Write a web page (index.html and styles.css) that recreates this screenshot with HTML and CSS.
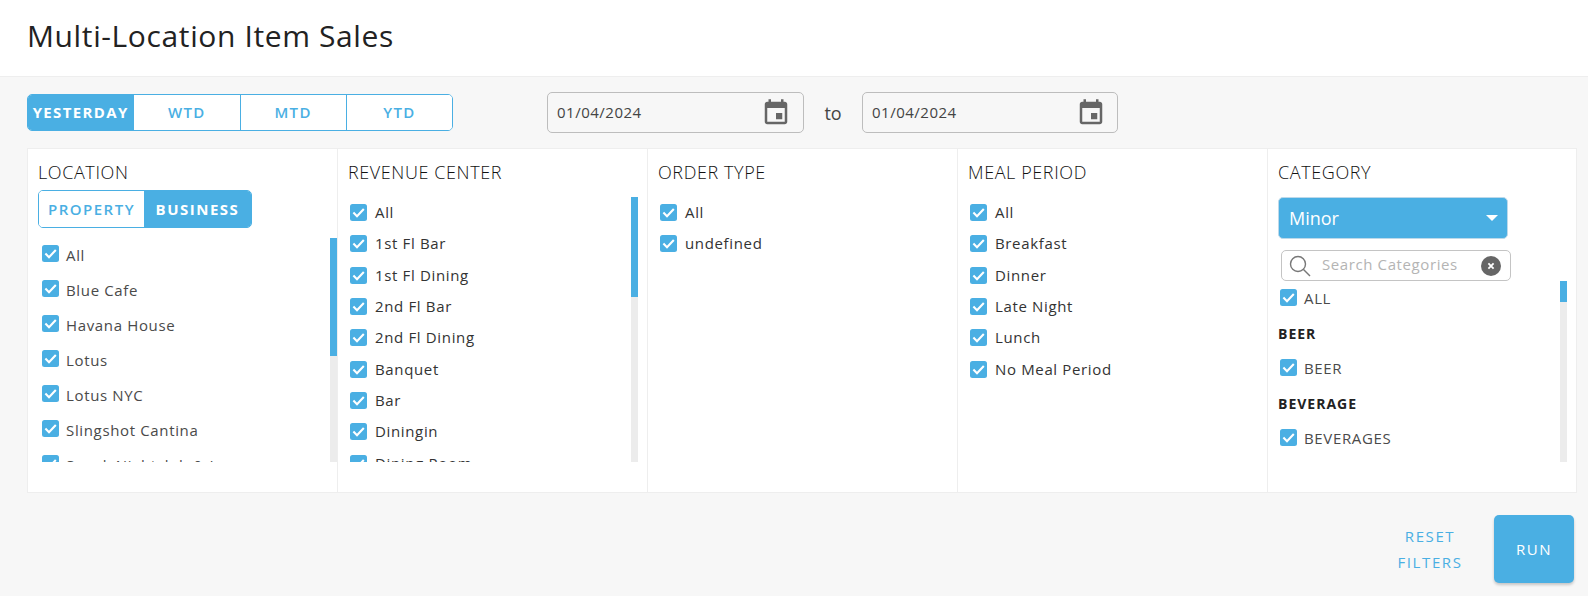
FILE: index.html
```html
<!DOCTYPE html>
<html lang="en">
<head>
<meta charset="utf-8">
<title>Multi-Location Item Sales</title>
<link rel="stylesheet" href="styles.css">
</head>
<body>
<svg class="defs" width="0" height="0" aria-hidden="true">
  <symbol id="check" viewBox="0 0 17 17">
    <rect width="17" height="17" rx="2.5" fill="#4aafe3"/>
    <path d="M3.4 8.6 7 12.2 13.8 5" fill="none" stroke="#fff" stroke-width="2.1"/>
  </symbol>
  <symbol id="cal" viewBox="0 0 24 24">
    <path d="M17 12h-5v5h5v-5zM16 1v2H8V1H6v2H5c-1.11 0-1.99.9-1.99 2L3 19c0 1.1.89 2 2 2h14c1.1 0 2-.9 2-2V5c0-1.1-.9-2-2-2h-1V1h-2zm3 18H5V8h14v11z" fill="#666"/>
  </symbol>
</svg>
<header class="page-header"><h1>Multi-Location Item Sales</h1></header>
<main class="content">
  <div class="toolbar">
    <div class="tabs">
      <button class="tab active">YESTERDAY</button>
      <button class="tab">WTD</button>
      <button class="tab">MTD</button>
      <button class="tab">YTD</button>
    </div>
    <div class="date date-from"><span>01/04/2024</span><svg class="cal"><use href="#cal"/></svg></div>
    <span class="to">to</span>
    <div class="date"><span>01/04/2024</span><svg class="cal"><use href="#cal"/></svg></div>
  </div>

  <section class="panel">
    <div class="col">
      <h2>LOCATION</h2>
      <div class="toggle"><button class="toggle-btn">PROPERTY</button><button class="toggle-btn active">BUSINESS</button></div>
      <ul class="list list-location">
        <li class="item"><svg class="box"><use href="#check"/></svg><span>All</span></li>
        <li class="item"><svg class="box"><use href="#check"/></svg><span>Blue Cafe</span></li>
        <li class="item"><svg class="box"><use href="#check"/></svg><span>Havana House</span></li>
        <li class="item"><svg class="box"><use href="#check"/></svg><span>Lotus</span></li>
        <li class="item"><svg class="box"><use href="#check"/></svg><span>Lotus NYC</span></li>
        <li class="item"><svg class="box"><use href="#check"/></svg><span>Slingshot Cantina</span></li>
        <li class="item"><svg class="box"><use href="#check"/></svg><span>Speak Nightclub &amp; Lounge</span></li>
      </ul>
      <div class="scroll scroll-location"><div class="thumb"></div></div>
    </div>

    <div class="col">
      <h2>REVENUE CENTER</h2>
      <ul class="list list-tall">
        <li class="item"><svg class="box"><use href="#check"/></svg><span>All</span></li>
        <li class="item"><svg class="box"><use href="#check"/></svg><span>1st Fl Bar</span></li>
        <li class="item"><svg class="box"><use href="#check"/></svg><span>1st Fl Dining</span></li>
        <li class="item"><svg class="box"><use href="#check"/></svg><span>2nd Fl Bar</span></li>
        <li class="item"><svg class="box"><use href="#check"/></svg><span>2nd Fl Dining</span></li>
        <li class="item"><svg class="box"><use href="#check"/></svg><span>Banquet</span></li>
        <li class="item"><svg class="box"><use href="#check"/></svg><span>Bar</span></li>
        <li class="item"><svg class="box"><use href="#check"/></svg><span>Diningin</span></li>
        <li class="item"><svg class="box"><use href="#check"/></svg><span>Dining Room</span></li>
      </ul>
      <div class="scroll scroll-revenue"><div class="thumb"></div></div>
    </div>

    <div class="col">
      <h2>ORDER TYPE</h2>
      <ul class="list list-tall">
        <li class="item"><svg class="box"><use href="#check"/></svg><span>All</span></li>
        <li class="item"><svg class="box"><use href="#check"/></svg><span>undefined</span></li>
      </ul>
    </div>

    <div class="col">
      <h2>MEAL PERIOD</h2>
      <ul class="list list-tall">
        <li class="item"><svg class="box"><use href="#check"/></svg><span>All</span></li>
        <li class="item"><svg class="box"><use href="#check"/></svg><span>Breakfast</span></li>
        <li class="item"><svg class="box"><use href="#check"/></svg><span>Dinner</span></li>
        <li class="item"><svg class="box"><use href="#check"/></svg><span>Late Night</span></li>
        <li class="item"><svg class="box"><use href="#check"/></svg><span>Lunch</span></li>
        <li class="item"><svg class="box"><use href="#check"/></svg><span>No Meal Period</span></li>
      </ul>
    </div>

    <div class="col col-last">
      <h2>CATEGORY</h2>
      <div class="select"><span>Minor</span><i class="caret"></i></div>
      <div class="search">
        <svg class="search-icon" viewBox="0 0 22 22"><circle cx="9" cy="9" r="7.5" fill="none" stroke="#777" stroke-width="1.4"/><path d="M14.5 14.5 21 21" stroke="#777" stroke-width="1.4"/></svg>
        <span class="placeholder">Search Categories</span>
        <svg class="clear" viewBox="0 0 20 20"><circle cx="10" cy="10" r="10" fill="#666"/><path d="M7.4 7.4l5.2 5.2M12.6 7.4l-5.2 5.2" stroke="#fff" stroke-width="1.8"/></svg>
      </div>
      <ul class="list list-category">
        <li class="item"><svg class="box"><use href="#check"/></svg><span>ALL</span></li>
        <li class="group">BEER</li>
        <li class="item"><svg class="box"><use href="#check"/></svg><span>BEER</span></li>
        <li class="group">BEVERAGE</li>
        <li class="item"><svg class="box"><use href="#check"/></svg><span>BEVERAGES</span></li>
      </ul>
      <div class="scroll scroll-category"><div class="thumb"></div></div>
    </div>
  </section>

  <div class="actions">
    <button class="reset">RESET<br>FILTERS</button>
    <button class="run">RUN</button>
  </div>
</main>
</body>
</html>
```
FILE: styles.css
```css
* { box-sizing: border-box; }
html, body { margin: 0; padding: 0; }
body {
  height: 596px;
  overflow: hidden;
  background: #f7f7f7;
  color: #333;
  font-family: "Open Sans", sans-serif;
}
button { font-family: inherit; cursor: pointer; }
ul { list-style: none; margin: 0; padding: 0; }
.defs { position: absolute; }

.page-header {
  height: 77px;
  padding: 17px 27px 0;
  background: #fff;
  border-bottom: 1px solid #eeeeee;
}
h1 {
  margin: 0;
  font-size: 30px;
  font-weight: 400;
  line-height: 38px;
  letter-spacing: 0.62px;
  color: #222;
}

.content { padding: 15px 11px 0 27px; }

.toolbar { display: flex; align-items: center; height: 41px; }
.tabs {
  display: flex;
  width: 426px;
  height: 37px;
  margin-right: 94px;
  background: #fff;
  border: 1px solid #4aafe3;
  border-radius: 5px;
  overflow: hidden;
}
.tab {
  flex: 1;
  padding: 0 0 2px;
  background: #fff;
  border: 0;
  border-left: 1px solid #4aafe3;
  color: #4aafe3;
  font-size: 15px;
  font-weight: 600;
  letter-spacing: 1.35px;
}
.tab.active {
  background: #4aafe3;
  border-left: 0;
  color: #fff;
  font-weight: 700;
}
.date {
  display: flex;
  align-items: center;
  justify-content: space-between;
  width: 256px;
  height: 41px;
  padding: 0 11px 0 9px;
  border: 1px solid #bdbdbd;
  border-radius: 5px;
  font-size: 15px;
  letter-spacing: 0.5px;
  color: #444;
}
.date span { padding-bottom: 2px; }
.date-from { width: 257px; padding-right: 12px; }
.cal { width: 30px; height: 30px; }
.to { width: 58px; text-align: center; font-size: 18px; color: #444; }

.panel {
  display: grid;
  grid-template-columns: repeat(5, 310px);
  width: 1550px;
  height: 345px;
  margin-top: 15px;
  background: #fff;
  border: 1px solid #eeeeee;
}
.col {
  position: relative;
  padding: 13px 0 0 10px;
  border-right: 1px solid #eeeeee;
}
.col-last { border-right: 0; }
h2 {
  margin: 0;
  font-size: 18px;
  font-weight: 300;
  line-height: 20px;
  letter-spacing: 0.6px;
  color: #111;
}

.toggle {
  display: flex;
  width: 214px;
  height: 38px;
  margin-top: 8px;
  border: 1px solid #4aafe3;
  border-radius: 5px;
  overflow: hidden;
}
.toggle-btn {
  padding: 0;
  width: 105px;
  background: #fff;
  border: 0;
  color: #4aafe3;
  font-size: 15px;
  font-weight: 600;
  letter-spacing: 1.5px;
}
.toggle-btn.active {
  flex: 1;
  background: #4aafe3;
  color: #fff;
  font-weight: 700;
}

.list { overflow: hidden; padding-top: 7px; }
.list-location { height: 224px; margin: 10px 0 0 4px; }
.list-tall { height: 265px; margin: 15px 0 0 2px; }
.list-category { height: 181px; padding-top: 8px; }

.item {
  display: flex;
  height: 31.33px;
  font-size: 15px;
  letter-spacing: 0.65px;
  color: #333;
}
.item span { margin-left: 8px; line-height: 17px; }
.box { flex: none; width: 17px; height: 17px; }
.list-location .item { height: 35px; color: #4a4a4a; }
.list-location .item span { margin-left: 7px; margin-top: 2px; }
.list-category .item { height: 35px; margin-left: 2px; color: #4a4a4a; }
.list-category .item span { margin-left: 7px; margin-top: 1px; }
.group {
  height: 35px;
  font-size: 14px;
  font-weight: 700;
  letter-spacing: 1px;
  line-height: 20px;
  color: #222;
}

.select {
  display: flex;
  align-items: center;
  justify-content: space-between;
  width: 230px;
  height: 42px;
  margin-top: 15px;
  padding: 0 9px 0 10px;
  background: #4aafe3;
  border: 1px solid #bdd9ea;
  border-radius: 5px;
  color: #fff;
  font-size: 18px;
}
.caret {
  width: 0;
  height: 0;
  border-left: 6px solid transparent;
  border-right: 6px solid transparent;
  border-top: 6px solid #fff;
}
.search {
  display: flex;
  align-items: center;
  width: 230px;
  height: 31px;
  margin: 11px 0 0 3px;
  padding: 0 9px 0 7px;
  border: 1px solid #c4c4c4;
  border-radius: 5px;
}
.search-icon { width: 22px; height: 22px; flex: none; }
.placeholder {
  flex: 1;
  margin-left: 11px;
  padding-bottom: 4px;
  font-size: 15px;
  letter-spacing: 0.6px;
  color: #b4b4b4;
}
.clear { width: 20px; height: 20px; flex: none; }

.scroll { position: absolute; width: 7px; background: #ececec; }
.thumb { background: #4aafe3; }
.scroll-location { right: 0; top: 89px; height: 224px; }
.scroll-location .thumb { height: 118px; }
.scroll-revenue { right: 9px; top: 48px; height: 265px; }
.scroll-revenue .thumb { height: 100px; }
.scroll-category { right: 11px; top: 132px; height: 181px; }
.scroll-category .thumb { height: 21px; }

.actions {
  display: flex;
  align-items: center;
  justify-content: flex-end;
  width: 1547px;
  margin-top: 22px;
}
.reset {
  width: 100px;
  margin-right: 14px;
  padding: 0 0 1px;
  background: none;
  border: 0;
  color: #4aafe3;
  font-size: 15px;
  letter-spacing: 1.6px;
  line-height: 26px;
}
.run {
  width: 80px;
  height: 68px;
  padding: 0;
  background: #4aafe3;
  border: 0;
  border-radius: 5px;
  box-shadow: 0 2px 3px rgba(0, 0, 0, 0.2);
  color: #fff;
  font-size: 15px;
  font-weight: 400;
  letter-spacing: 1.5px;
}
```
